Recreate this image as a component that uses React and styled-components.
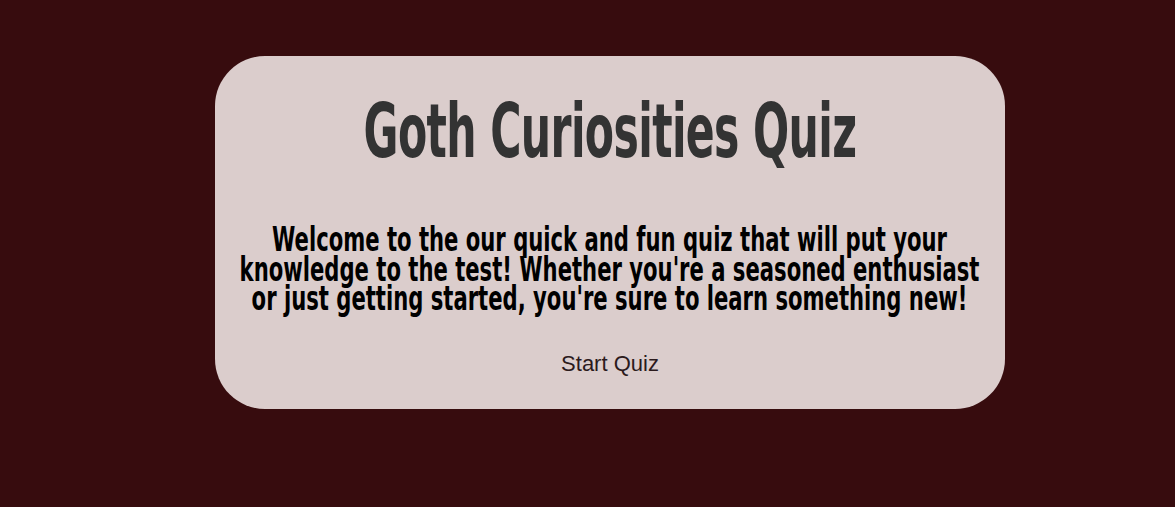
import React from "react";
import styled, { createGlobalStyle } from "styled-components";

const Global = createGlobalStyle`
  html, body { margin: 0; padding: 0; }
  body {
    background: #370c0e;
    font-family: "Liberation Sans", Arial, sans-serif;
  }
`;

const Page = styled.main`
  min-height: 507px;
  padding: 56px 0 0 215px;
  box-sizing: border-box;
`;

const Card = styled.section`
  width: 790px;
  height: 353px;
  box-sizing: border-box;
  background: #dbcdcc;
  border-radius: 50px;
  display: flex;
  flex-direction: column;
  align-items: center;
  padding-top: 37px;
  overflow: hidden;
`;

const Title = styled.h1`
  margin: 0;
  font-family: "DejaVu Sans Condensed", "DejaVu Sans", sans-serif;
  font-weight: 700;
  font-size: 74px;
  line-height: 76px;
  color: #333333;
  white-space: nowrap;
  transform: scaleX(0.64);
  letter-spacing: -1px;
`;

const Intro = styled.p`
  margin: 56px 0 0;
  font-family: "DejaVu Sans Condensed", "DejaVu Sans", sans-serif;
  font-weight: 700;
  font-size: 33px;
  line-height: 29.5px;
  color: #000;
  text-align: center;
  white-space: nowrap;
  transform: scaleX(0.712);
`;

const StartButton = styled.button`
  margin-top: 37px;
  background: none;
  border: none;
  padding: 0;
  font-family: "Liberation Sans", Arial, sans-serif;
  font-size: 22px;
  color: #2b1a1c;
  cursor: pointer;
`;

export default function App() {
  return (
    <>
      <Global />
      <Page>
        <Card>
          <Title>Goth Curiosities Quiz</Title>
          <Intro>
            Welcome to the our quick and fun quiz that will put your
            <br />
            knowledge to the test! Whether you're a seasoned enthusiast
            <br />
            or just getting started, you're sure to learn something new!
          </Intro>
          <StartButton>Start Quiz</StartButton>
        </Card>
      </Page>
    </>
  );
}
